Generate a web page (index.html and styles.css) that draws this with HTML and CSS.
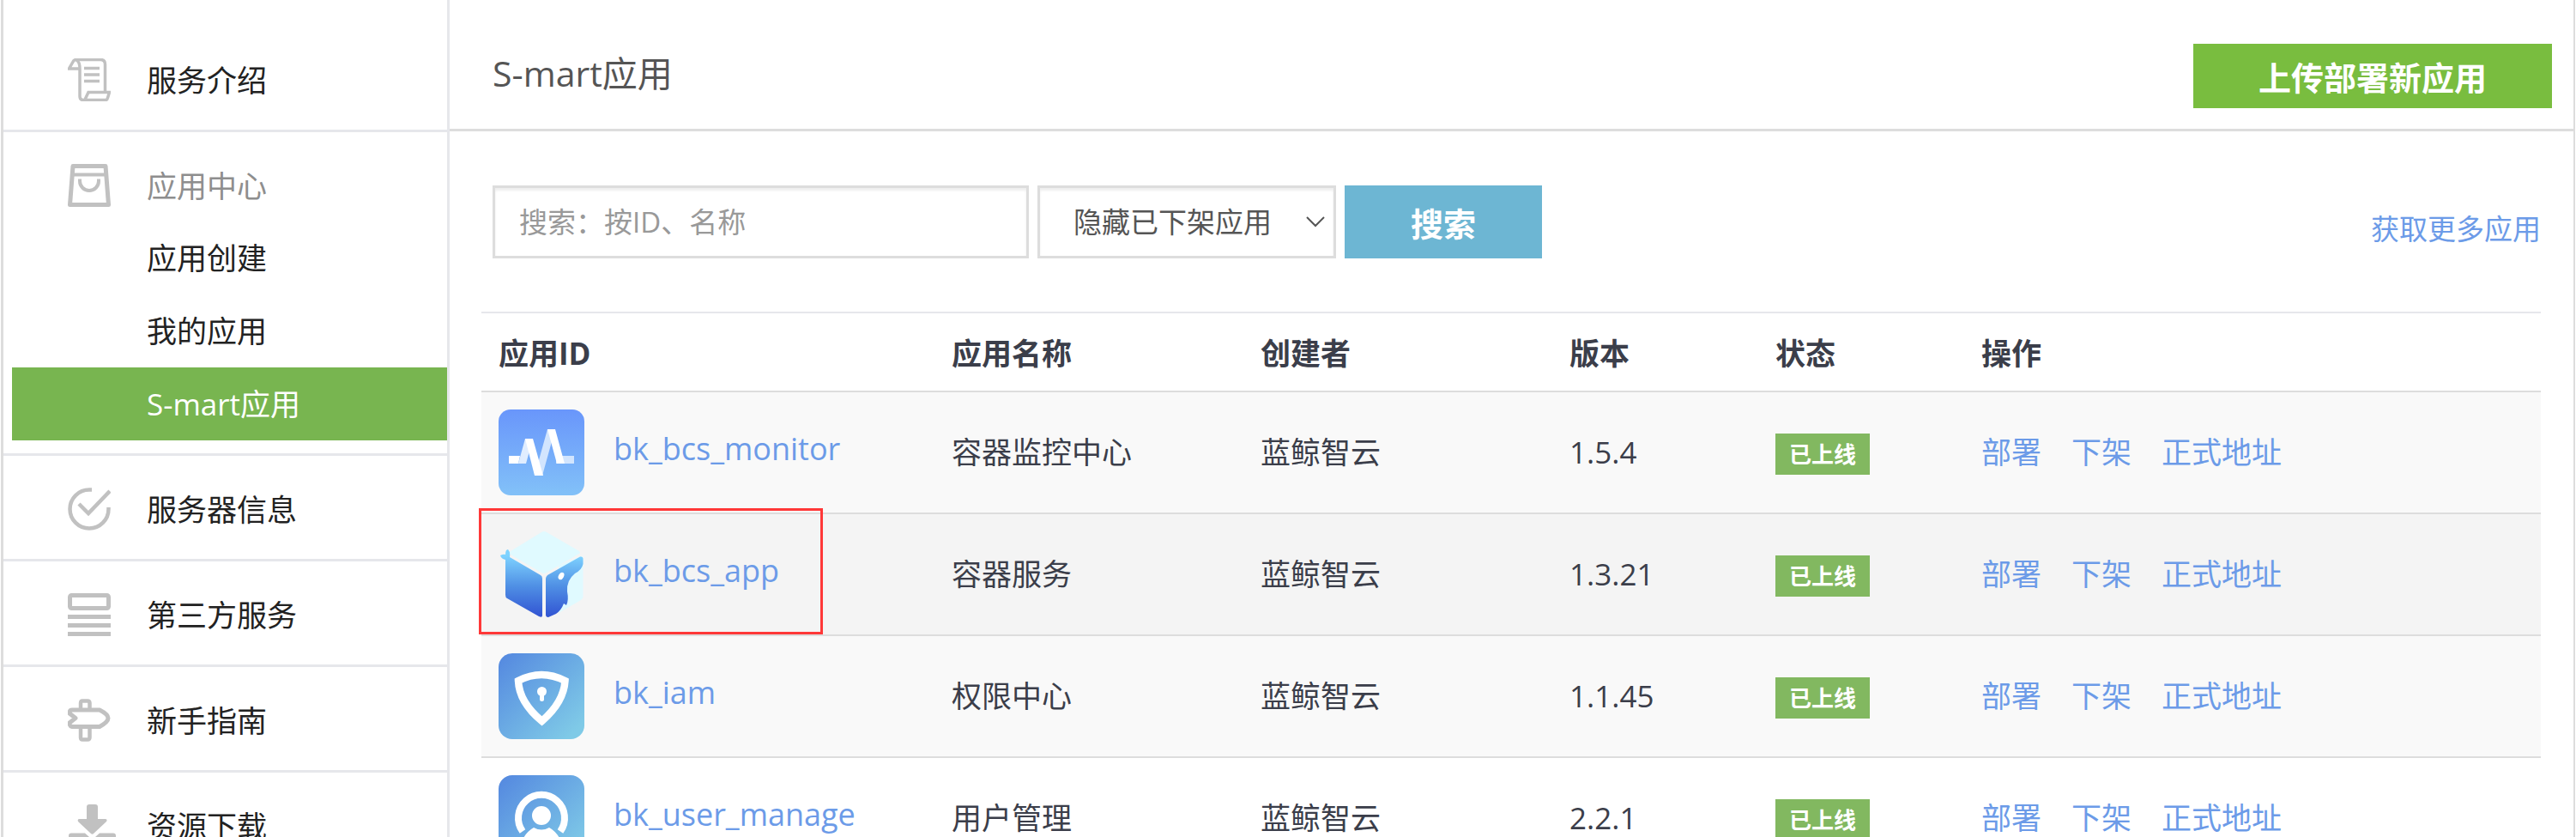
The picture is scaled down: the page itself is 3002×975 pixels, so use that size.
FILE: index.html
```html
<!DOCTYPE html>
<html lang="zh-CN">
<head>
<meta charset="utf-8">
<title>S-mart应用</title>
<link rel="stylesheet" href="styles.css">
</head>
<body>
<div class="page">
  <nav class="sidebar">
    <section class="group group-first">
      <a class="group-head" href="#">
        <svg class="icon" viewBox="0 0 50 50" fill="none" stroke="#c1c1c1" stroke-width="3.500">
          <path d="M14 12H1.500L6 4Q7 1.500 10 1.500H38Q43.500 1.500 43.500 7V39M14 12V44Q14 48.500 18 48.500H44Q46 48.500 46.500 46L48.500 39.500H24L20 48M10 2Q14 4 14 12"/>
          <path d="M19 11.500H37M19 19H37M19 26.500H37"/>
        </svg>
        <span>服务介绍</span>
      </a>
    </section>
    <section class="group">
      <a class="group-head group-current" href="#">
        <svg class="icon" viewBox="0 0 50 50" fill="none" stroke="#c1c1c1" stroke-width="5">
          <path d="M6 2.500H44L47.500 47.500H2.500Z" stroke-linejoin="round"/>
          <path d="M5 12.500H45" stroke-width="4"/>
          <path d="M14 17.500V20A11 11 0 0 0 36 20V17.500" stroke-width="4"/>
        </svg>
        <span>应用中心</span>
      </a>
      <ul class="sub">
        <li><a href="#">应用创建</a></li>
        <li><a href="#">我的应用</a></li>
        <li><a class="active" href="#">S-mart应用</a></li>
      </ul>
    </section>
    <section class="group">
      <a class="group-head" href="#">
        <svg class="icon" viewBox="0 0 50 50" fill="none" stroke="#c1c1c1" stroke-width="4.500">
          <path d="M28 2.500H25A22.500 22.500 0 1 0 47.500 25V23"/>
          <path d="M13 19L24 30L49 4"/>
        </svg>
        <span>服务器信息</span>
      </a>
    </section>
    <section class="group">
      <a class="group-head" href="#">
        <svg class="icon" viewBox="0 0 50 50" fill="none" stroke="#c1c1c1" stroke-width="5">
          <rect x="2.500" y="2.500" width="45" height="15" rx="2"/>
          <path d="M0 27.500H50M0 37.500H50M0 47.500H50"/>
        </svg>
        <span>第三方服务</span>
      </a>
    </section>
    <section class="group">
      <a class="group-head" href="#">
        <svg class="icon" viewBox="0 0 50 50" fill="none" stroke="#c1c1c1" stroke-width="5">
          <path d="M5 13H37Q47 18 47 22.500Q47 27 37 32.500H5Q2 32 2 28L9 22.500L2 17Q2 13 5 13Z" stroke-linejoin="round"/>
          <path d="M15 13V5Q15 2.500 17 2.500H23Q25.500 2.500 25.500 5V13M15 33V45Q15 47.500 17 47.500H23Q25.500 47.500 25.500 45V33" stroke-width="4.500"/>
        </svg>
        <span>新手指南</span>
      </a>
    </section>
    <section class="group">
      <a class="group-head" href="#">
        <svg class="icon icon-wide" viewBox="0 0 58 50" fill="#c1c1c1">
          <path d="M25 0H32Q35 0 35 3V17H44Q47 18 44.500 20.500L30 34Q28.500 35.500 27 34L12.500 20.500Q10.500 18 13 17H22V3Q22 0 25 0Z"/>
          <path d="M4 33.500H20L25 38Q28.500 41 32 38L37 33.500H53Q56 33.500 56 36.500V47Q56 50 53 50H4Q1 50 1 47V36.500Q1 33.500 4 33.500Z"/>
        </svg>
        <span>资源下载</span>
      </a>
    </section>
  </nav>

  <main class="main">
    <header class="header">
      <h1>S-mart应用</h1>
      <button class="btn upload" type="button">上传部署新应用</button>
    </header>

    <div class="content">
      <form class="filter">
        <input class="field keyword" type="text" placeholder="搜索：按ID、名称" aria-label="搜索">
        <div class="select-wrap">
          <select class="field state" aria-label="应用状态">
            <option>隐藏已下架应用</option>
          </select>
          <svg class="chevron" viewBox="0 0 22 13" fill="none" stroke="#555" stroke-width="2"><path d="M1 1L11 11L21 1"/></svg>
        </div>
        <button class="btn search" type="button">搜索</button>
        <a class="more" href="#">获取更多应用</a>
      </form>

      <table class="apps">
        <colgroup><col class="c-id"><col class="c-name"><col class="c-name"><col class="c-ver"><col class="c-ver"><col></colgroup>
        <thead>
          <tr><th>应用ID</th><th>应用名称</th><th>创建者</th><th>版本</th><th>状态</th><th>操作</th></tr>
        </thead>
        <tbody>
          <tr class="odd">
            <td>
              <div class="app">
                <svg class="logo" viewBox="0 0 100 100">
                  <defs><linearGradient id="g1" x1="0" y1="0" x2="0" y2="1"><stop offset="0" stop-color="#6996fb"/><stop offset="1" stop-color="#82c1f8"/></linearGradient></defs>
                  <rect width="100" height="100" rx="14" fill="url(#g1)"/>
                  <path d="M12 54H25L23 63H12Z" fill="#fff"/>
                  <path d="M23 63L31 34H40L32 63Z" fill="#e0edff"/>
                  <path d="M67 54H88V63H67ZM42 77L57 23H66L51 77Z" fill="#d2e5fe"/>
                  <path d="M31 34H40L52 77H42ZM57 23H66L77 63H68Z" fill="#fff"/>
                </svg>
                <a href="#">bk_bcs_monitor</a>
              </div>
            </td>
            <td>容器监控中心</td><td>蓝鲸智云</td><td>1.5.4</td>
            <td><span class="badge">已上线</span></td>
            <td><div class="ops"><a href="#">部署</a><a href="#">下架</a><a href="#">正式地址</a></div></td>
          </tr>
          <tr class="hover">
            <td class="marked">
              <div class="app">
                <svg class="logo" viewBox="0 0 100 100">
                  <defs>
                    <linearGradient id="g2" x1="0" y1="28" x2="0" y2="100" gradientUnits="userSpaceOnUse"><stop offset="0" stop-color="#7fd3ff"/><stop offset=".5" stop-color="#4f8fe4"/><stop offset="1" stop-color="#3153d2"/></linearGradient>
                  </defs>
                  <path d="M50 1Q53 -1 56 1L94 23Q96 25 94 26L56 48Q53 50 50 48L14 27Q12 25 14 23Z" fill="#e0faff"/>
                  <path d="M96 29Q98.500 29 98.500 32V76Q98.500 78 96 80L70 95V40Z" fill="#e0faff"/>
                  <path d="M2 28Q6 26 8 27Q8 21 11 21Q14 24 13 30L49 51Q51 52 51 55V98Q51 101 47 99L10 78Q8 77 8 74V33Q3 32 2 28Z" fill="url(#g2)"/>
                  <path d="M95 29.500Q98.500 29 98.500 32V38Q97 45 89 49Q79 57 80 70Q82 80 79 86L76 84Q73 92 67 96L58 100Q55 100 55 97V55Q55 53 57 51Z" fill="url(#g2)"/>
                  <ellipse cx="73" cy="52" rx="3" ry="4.500" transform="rotate(28 73 52)" fill="#fff"/>
                </svg>
                <a href="#">bk_bcs_app</a>
              </div>
            </td>
            <td>容器服务</td><td>蓝鲸智云</td><td>1.3.21</td>
            <td><span class="badge">已上线</span></td>
            <td><div class="ops"><a href="#">部署</a><a href="#">下架</a><a href="#">正式地址</a></div></td>
          </tr>
          <tr class="odd">
            <td>
              <div class="app">
                <svg class="logo" viewBox="0 0 100 100">
                  <defs><linearGradient id="g3" x1="0" y1="0" x2="1" y2="1"><stop offset="0.050" stop-color="#568be0"/><stop offset=".9" stop-color="#7fcae7"/></linearGradient></defs>
                  <rect width="100" height="100" rx="16" fill="url(#g3)"/>
                  <path d="M23 32Q50 18 77.500 32Q76 57 50.500 79Q24 57 23 32Z" fill="none" stroke="#fff" stroke-width="8.500"/>
                  <circle cx="50.500" cy="44.500" r="5.500" fill="#fff"/>
                  <path d="M50.500 45V53.500" stroke="#fff" stroke-width="5" stroke-linecap="round"/>
                </svg>
                <a href="#">bk_iam</a>
              </div>
            </td>
            <td>权限中心</td><td>蓝鲸智云</td><td>1.1.45</td>
            <td><span class="badge">已上线</span></td>
            <td><div class="ops"><a href="#">部署</a><a href="#">下架</a><a href="#">正式地址</a></div></td>
          </tr>
          <tr>
            <td>
              <div class="app">
                <svg class="logo" viewBox="0 0 100 100">
                  <rect width="100" height="100" rx="16" fill="url(#g3)"/>
                  <path d="M28 65.500A27 27 0 1 1 72 65.500" fill="none" stroke="#fff" stroke-width="8"/>
                  <circle cx="50" cy="47" r="11" fill="#fff"/>
                  <path d="M41 61Q50 66 59 61Q68 66 73 77H27Q32 66 41 61Z" fill="#fff"/>
                </svg>
                <a href="#">bk_user_manage</a>
              </div>
            </td>
            <td>用户管理</td><td>蓝鲸智云</td><td>2.2.1</td>
            <td><span class="badge">已上线</span></td>
            <td><div class="ops"><a href="#">部署</a><a href="#">下架</a><a href="#">正式地址</a></div></td>
          </tr>
        </tbody>
      </table>
    </div>
  </main>
</div>
</body>
</html>
```
FILE: styles.css
```css
*, *::before, *::after { box-sizing: border-box; }

body {
  margin: 0;
  background: #fff;
  color: #3b3e4a;
  font-family: "Open Sans", "Noto Sans CJK SC", sans-serif;
  font-size: 35px;
  line-height: 48px;
}

a { color: #6c9be8; text-decoration: none; }

button, input, select { font-family: inherit; }

.page {
  display: flex;
  height: 100vh;
  overflow: hidden;
  margin: 0 1px;
  border: solid #ddd;
  border-width: 0 2px 0 3px;
}

.sidebar {
  flex: none;
  width: 520px;
  border-right: 3px solid #e6e7eb;
}

.group { border-bottom: 3px solid #e6e7eb; }
.group-first { padding-top: 31px; }

.group-head {
  display: flex;
  align-items: flex-start;
  gap: 42px;
  height: 120px;
  padding: 37px 0 0 75px;
  color: #222;
}

.group-head span { padding-top: 2px; }

.group-current { height: 104px; color: #8e8e8e; }

.group-head .icon { width: 50px; height: 50px; flex: none; }
.group-head .icon-wide { width: 58px; margin-right: -8px; }

.sub { list-style: none; margin: 0; padding: 0 0 15px 10px; }

.sub a {
  display: flex;
  align-items: center;
  height: 85px;
  padding-left: 157px;
  color: #222;
}

.sub .active { background: #78b550; color: #fff; }

.main { flex: 1; min-width: 0; }

.header {
  display: flex;
  align-items: center;
  justify-content: space-between;
  height: 153px;
  padding: 27px 25px 0 50px;
  border-bottom: 3px solid #ddd;
}

h1 { margin: 0; padding-bottom: 8px; font-size: 41px; font-weight: 400; color: #555; }

.btn {
  padding: 0;
  border: 0;
  color: #fff;
  font-size: 38px;
  font-weight: 700;
}

.upload { width: 418px; height: 75px; background: #79bd3f; }

.content { padding: 63px 38px 0 37px; }

.filter {
  display: flex;
  gap: 10px;
  padding: 0 0 62px 13px;
}

.field {
  height: 85px;
  border: 3px solid #ddd;
  border-radius: 0;
  background: #fff;
  box-shadow: inset 0 3px 3px rgba(0, 0, 0, .07);
  color: #555;
  font-size: 33px;
}

.keyword { width: 625px; padding: 0 28px; }
.keyword::placeholder { color: #999; opacity: 1; }

.select-wrap { position: relative; }
.state { width: 348px; padding: 0 39px; appearance: none; }
.chevron { position: absolute; right: 13px; top: 36px; width: 22px; height: 13px; pointer-events: none; }

.search { width: 230px; height: 85px; background: #6db6d3; }

.more { margin-left: auto; align-self: flex-end; margin-bottom: 10px; font-size: 33px; }

.apps {
  width: 100%;
  table-layout: fixed;
  border-collapse: separate;
  border-spacing: 0;
  border-top: 2px solid #e6e7eb;
}

.c-id { width: 22%; }
.c-name { width: 15%; }
.c-ver { width: 10%; }

.apps th {
  height: 92px;
  padding: 4px 20px 0;
  border-bottom: 2px solid #ddd;
  text-align: left;
}

.apps td { padding: 20px; border-bottom: 2px solid #ddd; white-space: nowrap; }
.odd { background: #f9f9f9; }
.hover { background: #f4f4f4; }

.app { display: flex; align-items: center; gap: 34px; }
.app a { padding-bottom: 8px; font-size: 36px; }
.logo { width: 100px; height: 100px; flex: none; }

.marked { position: relative; }
.marked::after {
  content: "";
  position: absolute;
  left: -3px;
  top: -7px;
  width: 401px;
  height: 147px;
  border: 3px solid #ff3838;
}

.badge {
  display: inline-block;
  padding: 0 16px;
  background: #82b860;
  color: #fff;
  font-size: 26px;
  font-weight: 700;
  vertical-align: middle;
}

.ops { display: flex; gap: 35px; }
```
